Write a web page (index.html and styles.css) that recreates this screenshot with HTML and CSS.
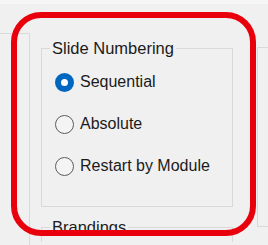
FILE: index.html
```html
<!DOCTYPE html>
<html lang="en">
<head>
    <meta charset="UTF-8">
    <meta name="viewport" content="width=device-width, initial-scale=1.0">
    <title>Slide Numbering</title>
    <link rel="stylesheet" href="styles.css">
</head>
<body>
    <div class="top-strip"></div>

    <div class="page">
        <div class="left-stub"></div>

        <div class="main">
            <fieldset class="group">
                <legend class="group-title">Slide Numbering</legend>
                <div class="options">
                    <div class="option">
                        <span class="radio checked"></span>
                        <span class="label">Sequential</span>
                    </div>
                    <div class="option">
                        <span class="radio"></span>
                        <span class="label">Absolute</span>
                    </div>
                    <div class="option">
                        <span class="radio"></span>
                        <span class="label">Restart by Module</span>
                    </div>
                </div>
            </fieldset>

            <fieldset class="group group-next">
                <legend class="group-title">Brandings</legend>
            </fieldset>
        </div>

        <div class="right-stub"></div>
    </div>

    <div class="highlight"></div>
</body>
</html>
```

FILE: styles.css
```css
html,
body {
    margin: 0;
    height: 245px;
    overflow: hidden;
}

body {
    position: relative;
    background: #f0f0f0;
    font-family: "Liberation Sans", Arial, sans-serif;
    font-size: 16px;
    color: #1b1b1b;
}

.top-strip {
    height: 4px;
    background: #f6f6f7;
}

.page {
    display: grid;
    grid-template-columns: 30px 1fr 11px;
    height: 241px;
    overflow: hidden;
}

.left-stub {
    box-sizing: border-box;
    margin-top: 29px;
    border-top: 1px solid #d9d9d9;
    border-right: 1px solid #d9d9d9;
}

.right-stub {
    box-sizing: border-box;
    align-self: start;
    margin-top: 43px;
    height: 180px;
    border-top: 1px solid #d9d9d9;
    border-bottom: 1px solid #d9d9d9;
    border-left: 1px solid #d9d9d9;
}

.main {
    padding-top: 35px;
    padding-left: 11px;
    overflow: hidden;
}

.group {
    box-sizing: border-box;
    width: 192px;
    margin: 0;
    padding: 0 0 30px 8px;
    border: 1px solid #d9d9d9;
    min-width: 0;
}

.group-title {
    padding: 0 2px;
    line-height: 18px;
    font-size: 16.5px;
}

.group-next {
    margin-top: 11px;
    padding-bottom: 0;
    height: 24px;
    border-bottom: none;
}

.options {
    display: flex;
    flex-direction: column;
    gap: 22px;
    padding-top: 15px;
    padding-left: 5px;
}

.option {
    display: flex;
    align-items: center;
    gap: 6px;
    height: 20px;
}

.radio {
    box-sizing: border-box;
    width: 19px;
    height: 19px;
    border-radius: 50%;
    border: 1px solid #5c5c5c;
    background: #f4f4f4;
}

.radio.checked {
    border: 6px solid #0067c0;
    background: #ffffff;
}

.label {
    line-height: 20px;
}

.highlight {
    position: absolute;
    left: 11px;
    top: 12px;
    box-sizing: border-box;
    width: 245px;
    height: 224px;
    border: 6px solid #e8000c;
    border-radius: 30px;
    pointer-events: none;
}
```
